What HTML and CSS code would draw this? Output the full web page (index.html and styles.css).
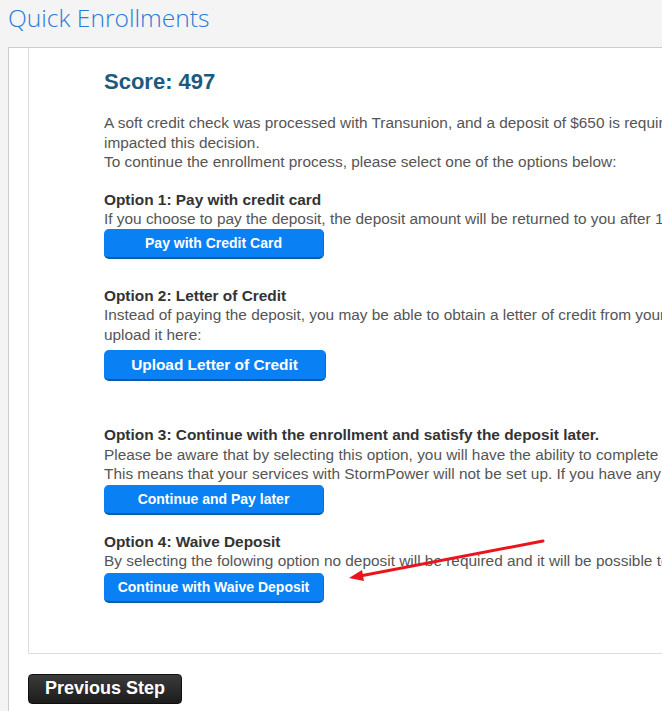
FILE: index.html
```html
<!DOCTYPE html>
<html lang="en">
<head>
  <meta charset="UTF-8" />
  <meta name="viewport" content="width=device-width, initial-scale=1.0" />
  <title>Quick Enrollments</title>
  <link rel="stylesheet" href="styles.css">
</head>
<body>
  <div class="page-title">Quick Enrollments</div>

  <div class="panel">
    <div class="step-box">
      <div class="step-content">
        <h2 class="score">Score: 497</h2>
        <p class="intro">
          A soft credit check was processed with Transunion, and a deposit of $650 is required. Your credit history has<br>
          impacted this decision.<br>
          To continue the enrollment process, please select one of the options below:
        </p>

        <div class="option option-card">
          <div class="option-title">Option 1: Pay with credit card</div>
          <div class="option-text">If you choose to pay the deposit, the deposit amount will be returned to you after 12 consecutive months of on-time payments.</div>
          <button class="btn-blue">Pay with Credit Card</button>
        </div>

        <div class="option option-letter">
          <div class="option-title">Option 2: Letter of Credit</div>
          <div class="option-text">Instead of paying the deposit, you may be able to obtain a letter of credit from your previous utility provider and<br>upload it here:</div>
          <button class="btn-blue btn-large">Upload Letter of Credit</button>
        </div>

        <div class="option option-later">
          <div class="option-title">Option 3: Continue with the enrollment and satisfy the deposit later.</div>
          <div class="option-text">Please be aware that by selecting this option, you will have the ability to complete the enrollment, but the deposit must be paid first.<br>This means that your services with StormPower will not be set up. If you have any questions, please contact us.</div>
          <button class="btn-blue">Continue and Pay later</button>
        </div>

        <div class="option option-waive">
          <div class="option-title">Option 4: Waive Deposit</div>
          <div class="option-text">By selecting the folowing option no deposit will be required and it will be possible to continue with the enrollment.</div>
          <button class="btn-blue">Continue with Waive Deposit</button>
        </div>
      </div>
    </div>

    <div class="step-nav">
      <button class="btn-dark">Previous Step</button>
    </div>
  </div>

  <!-- red arrow annotation drawn over the page -->
  <svg class="annotation" width="662" height="711" viewBox="0 0 662 711">
    <line x1="543" y1="541" x2="360" y2="576" stroke="#e8161c" stroke-width="3" stroke-linecap="round" />
    <polygon points="349,578 364,581 362,570" fill="#e8161c" />
  </svg>
</body>
</html>
```

FILE: styles.css
```css
body {
  margin: 0;
  background-color: #f4f4f4;
  font-family: Arial, "Liberation Sans", sans-serif;
  overflow: hidden;
  position: relative;
}
.page-title {
  height: 47px;
  padding-left: 8px;
  font-family: "Open Sans", sans-serif;
  font-weight: 300;
  font-size: 24.6px;
  line-height: 36px;
  color: #2b7bd6;
  box-sizing: border-box;
}
.panel {
  margin-left: 8px;
  width: 1100px;
  background: #fff;
  border-top: 1px solid #ccc;
  border-left: 1px solid #ccc;
  padding-bottom: 30px;
}
.step-box {
  margin-left: 19px;
  border-left: 1px solid #ddd;
  border-bottom: 1px solid #ddd;
}
.step-content {
  padding: 21px 0 50px 75px;
  white-space: nowrap;
}
.score {
  margin: 0;
  font-size: 22px;
  line-height: 26px;
  font-weight: bold;
  color: #1d5a7c;
}
.intro {
  margin: 18px 0 0 0;
  font-size: 15.4px;
  line-height: 19.5px;
  color: #555;
}
.option {
  font-size: 15.4px;
  line-height: 19.5px;
  color: #555;
}
.option-title {
  font-weight: bold;
  color: #333;
}
.option-card {
  margin-top: 18px;
}
.option-letter {
  margin-top: 27px;
}
.option-letter .btn-blue {
  margin-top: 6px;
}
.option-later {
  margin-top: 44px;
}
.option-later .btn-blue {
  margin-top: 1px;
}
.option-waive {
  margin-top: 17px;
}
.option-waive .btn-blue {
  margin-top: 2px;
}
.btn-blue {
  display: block;
  width: 220px;
  height: 30px;
  padding: 0;
  background: #0a80f5;
  color: #fff;
  font-family: Arial, "Liberation Sans", sans-serif;
  font-size: 14px;
  font-weight: bold;
  border: none;
  border-bottom: 2px solid #0b5ca6;
  border-right: 1px solid #0b6fd0;
  border-radius: 5px;
  cursor: pointer;
}
.btn-large {
  width: 222px;
  height: 31px;
  font-size: 15.4px;
}
.step-nav {
  padding: 20px 0 0 19px;
}
.btn-dark {
  width: 154px;
  height: 30px;
  padding: 0;
  background: linear-gradient(#3b3b3b, #1c1c1c);
  color: #fff;
  font-family: Arial, "Liberation Sans", sans-serif;
  font-size: 18px;
  font-weight: bold;
  border: 1px solid #111;
  border-radius: 4px;
  cursor: pointer;
}
.annotation {
  position: absolute;
  top: 0;
  left: 0;
  pointer-events: none;
}
```
